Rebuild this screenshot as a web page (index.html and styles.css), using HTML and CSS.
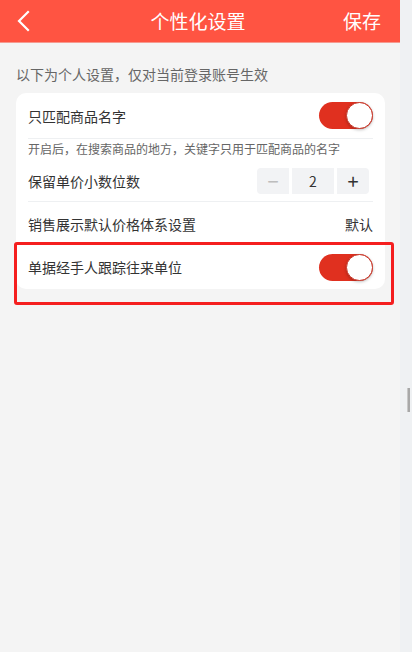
FILE: index.html
```html
<!DOCTYPE html>
<html lang="zh">
<head>
<meta charset="utf-8">
<title>个性化设置</title>
<link rel="stylesheet" href="styles.css">
</head>
<body>
<div class="screen">
  <div class="app">
    <header class="topbar">
      <span class="back">
        <svg width="20" height="24" viewBox="0 0 20 24"><polyline points="13,3 4,12 13,21" fill="none" stroke="#fff" stroke-width="2.2" stroke-linecap="square"/></svg>
      </span>
      <h1 class="title">个性化设置</h1>
      <span class="save">保存</span>
    </header>
    <main class="content">
      <p class="hint">以下为个人设置，仅对当前登录账号生效</p>
      <section class="card">
        <div class="row first">
          <span class="label">只匹配商品名字</span>
          <span class="switch on"><span class="knob"></span></span>
        </div>
        <p class="desc">开启后，在搜索商品的地方，关键字只用于匹配商品的名字</p>
        <div class="row stepper-row">
          <span class="label">保留单价小数位数</span>
          <div class="stepper">
            <span class="step minus">−</span>
            <span class="step value">2</span>
            <span class="step plus">+</span>
          </div>
        </div>
        <div class="row">
          <span class="label">销售展示默认价格体系设置</span>
          <span class="value-text">默认</span>
        </div>
        <div class="row last">
          <span class="label">单据经手人跟踪往来单位</span>
          <span class="switch on"><span class="knob"></span></span>
          <span class="highlight"></span>
        </div>
      </section>
    </main>
  </div>
  <div class="gutter"><span class="thumb"></span></div>
</div>
</body>
</html>
```
FILE: styles.css
```css
* { box-sizing: border-box; }
html, body { margin: 0; padding: 0; }
body {
  font-family: "Noto Sans CJK SC", "Noto Sans", sans-serif;
  color: #333;
  background: #f4f4f4;
}
.screen {
  display: flex;
  width: 412px;
  height: 652px;
  overflow: hidden;
}
.app {
  width: 400px;
  flex: none;
  background: #f4f4f4;
}
.gutter {
  width: 12px;
  flex: none;
  background: #eff1f3;
  padding-top: 388px;
  display: flex;
  justify-content: flex-end;
  padding-right: 2px;
}
.thumb {
  display: block;
  width: 3px;
  height: 24px;
  background: #a8a8a8;
  border-left: 1px solid #c8c8c8;
}
.topbar {
  height: 43px;
  background: #ff5442;
  border-bottom: 1px solid #f59a90;
  display: flex;
  align-items: center;
  padding: 0 19px 0 15px;
  color: #fff;
}
.back {
  width: 60px;
  display: flex;
  align-items: center;
  height: 24px;
}
.back svg { display: block; }
.title {
  flex: 1;
  margin: 0;
  text-align: center;
  font-size: 19px;
  font-weight: normal;
  line-height: 24px;
  margin-top: -1px;
}
.save {
  width: 60px;
  text-align: right;
  font-size: 19px;
  line-height: 24px;
  margin-top: -1px;
}
.content {
  padding: 0 15px 0 16px;
}
.hint {
  margin: 0;
  padding: 21px 0 0;
  height: 50px;
  font-size: 14px;
  line-height: 20px;
  color: #666;
}
.card {
  background: #fff;
  border-radius: 10px;
  padding: 0 12px;
}
.row {
  display: flex;
  align-items: center;
  justify-content: space-between;
  height: 43px;
  font-size: 14px;
  position: relative;
}
.row.first {
  height: 46px;
  border-bottom: 1px solid #eef0f2;
}
.stepper-row {
  height: 42px;
  border-bottom: 1px solid #eef0f2;
}
.row.last { height: 44px; }
.label { line-height: 20px; }
.desc {
  margin: 0;
  padding-top: 2px;
  height: 21px;
  font-size: 12px;
  line-height: 16px;
  color: #666;
}
.value-text { color: #333; }
.switch {
  width: 54px;
  height: 27px;
  border-radius: 14px;
  background: #e0301f;
  position: relative;
  display: block;
  flex: none;
}
.knob {
  position: absolute;
  right: 0;
  top: 0;
  width: 27px;
  height: 27px;
  border-radius: 50%;
  background: #fff;
  border: 1px solid #c8392b;
  box-shadow: 0 1px 3px rgba(0,0,0,0.25);
}
.stepper {
  display: flex;
  gap: 3px;
  margin-right: 4px;
}
.step {
  height: 26px;
  background: #f2f3f5;
  display: flex;
  align-items: center;
  justify-content: center;
  font-size: 14px;
  line-height: 20px;
}
.step.minus {
  width: 32px;
  color: #bdbdbd;
  font-size: 20px;
  border-radius: 4px 0 0 4px;
}
.step.value { width: 42px; color: #333; }
.step.plus {
  width: 32px;
  color: #333;
  font-size: 20px;
  border-radius: 0 4px 4px 0;
}
.highlight {
  position: absolute;
  left: -14px;
  right: -21px;
  top: -3px;
  bottom: -16px;
  border: 3px solid #f51f1f;
  border-radius: 3px;
  pointer-events: none;
}
```
